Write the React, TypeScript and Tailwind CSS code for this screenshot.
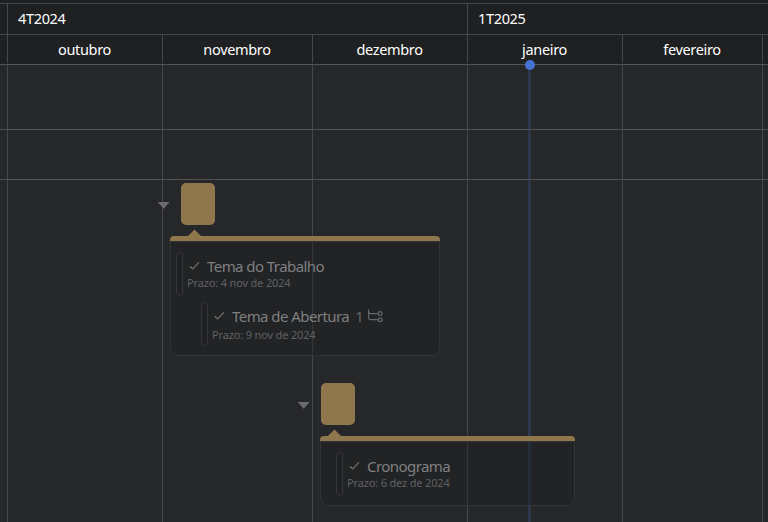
import React from "react";

const line = "border-[#464749]";

const months = [
  { name: "outubro", width: "w-[155px]" },
  { name: "novembro", width: "w-[150px]" },
  { name: "dezembro", width: "w-[155px]" },
  { name: "janeiro", width: "w-[155px]" },
  { name: "fevereiro", width: "w-[140px]" },
  { name: "", width: "w-[6px]" },
];

function Check() {
  return (
    <svg width="12" height="10" viewBox="0 0 12 10" fill="none" className="shrink-0">
      <path d="M.8 5.3 3.7 8 10 1.4" stroke="#6f7071" strokeWidth="1.2" />
    </svg>
  );
}

function Subtasks() {
  return (
    <svg width="16" height="14" viewBox="0 0 16 14" fill="none" stroke="#66676a" strokeWidth="1.2">
      <path d="M1.6.5v8.2a2 2 0 0 0 2 2h7.3M1.6 2.6a2 2 0 0 0 2 2h7.3" />
      <circle cx="13.2" cy="4.6" r="1.9" />
      <circle cx="13.2" cy="10.8" r="1.9" />
    </svg>
  );
}

type TaskProps = { title: string; due: string; count?: number; className: string; dueClass: string };

function Task({ title, due, count, className, dueClass }: TaskProps) {
  return (
    <div className={`flex h-[45px] ${className}`}>
      <div className="h-[44px] w-[7px] shrink-0 rounded-[4px] border border-[#363739] bg-[#202123]" />
      <div className="ml-1 whitespace-nowrap">
        <div className="flex h-[26px] items-center pl-[2px] pt-[2px]">
          <Check />
          <span className="ml-[6px] text-[15px] leading-5 tracking-[-0.56px] text-[#7f8081]">{title}</span>
          {count !== undefined && (
            <span className="ml-[6px] flex items-center gap-[4px] text-[15px] leading-5 tracking-[-0.5px] text-[#66676a]">
              {count}
              <Subtasks />
            </span>
          )}
        </div>
        <div className={`text-[11px] leading-[14px] tracking-[-0.16px] text-[#606163] ${dueClass}`}>{due}</div>
      </div>
    </div>
  );
}

type GroupProps = { className: string; cardClass: string; children: React.ReactNode };

function Group({ className, cardClass, children }: GroupProps) {
  return (
    <div className={className}>
      <div className="flex h-[42px] items-center">
        <svg width="12" height="7" viewBox="0 0 12 7" className="mt-[2px]">
          <path d="M-.3 0h11.8L5.6 6.8z" fill="#6c6d6f" />
        </svg>
        <div className="ml-[11px] h-[42px] w-[34px] rounded-[5px] bg-[#8f764c]" />
      </div>
      <svg width="16" height="8" viewBox="0 0 16 8" className="ml-[29px] mt-[4px] block">
        <path d="M0 8 7.5.4 15 8z" fill="#8f764c" />
      </svg>
      <div className={`-mt-px flex flex-col rounded-t-[4px] rounded-b-[8px] ${cardClass}`}>
        <div className="h-[5px] shrink-0 rounded-t-[4px] bg-[#8f764c]" />
        <div className="flex-1 rounded-b-[8px] border border-[#323335] bg-[#1c1e20]/40">{children}</div>
      </div>
    </div>
  );
}

export default function App() {
  return (
    <div className="relative h-[522px] w-[768px] overflow-hidden bg-[#262729] font-['Noto_Sans','Open_Sans',sans-serif]">
      <header className="h-[65px] border-b border-[#535456] bg-[#1f2022] pt-[3px] text-[14.5px] tracking-[-0.33px] text-white">
        <div className={`flex h-[31px] border-t pl-[7px] ${line}`}>
          <div className={`w-[460px] border-l pl-[10px] leading-[28px] ${line}`}>4T2024</div>
          <div className={`flex-1 border-l pl-[10px] leading-[28px] ${line}`}>1T2025</div>
        </div>
        <div className={`flex h-[29px] border-t pl-[7px] ${line}`}>
          {months.map((m, i) => (
            <div key={i} className={`shrink-0 border-l pr-px text-center leading-[28px] ${line} ${m.width}`}>
              {m.name}
            </div>
          ))}
        </div>
      </header>

      <main className="relative h-[457px]">
        <div className="absolute inset-0 flex pl-[7px]">
          {months.map((m, i) => (
            <div key={i} className={`shrink-0 border-l ${line} ${m.width}`} />
          ))}
        </div>
        <div className="absolute left-[528px] top-0 h-full w-[3px] bg-[#4573d2]/22" />
        <div className="relative h-[65px] border-b border-[#535456]" />
        <div className="relative h-[50px] border-b border-[#535456]" />
        <div className="relative pt-[3px]">
          <Group className="ml-[158px]" cardClass="ml-[12px] h-[120px] w-[270px]">
            <Task className="ml-[5px] mt-[10px]" dueClass="-mt-[2px]" title="Tema do Trabalho" due="Prazo: 4 nov de 2024" />
            <Task className="ml-[30px] mt-[5px]" dueClass="" title="Tema de Abertura" due="Prazo: 9 nov de 2024" count={1} />
          </Group>
          <Group className="ml-[298px] mt-[27px]" cardClass="ml-[22px] h-[70px] w-[255px]">
            <Task className="ml-[15px] mt-[10px]" dueClass="-mt-[2px]" title="Cronograma" due="Prazo: 6 dez de 2024" />
          </Group>
        </div>
      </main>
      <div className="absolute left-[525px] top-[60px] size-[10px] rounded-full bg-[#4573d2]" />
    </div>
  );
}
